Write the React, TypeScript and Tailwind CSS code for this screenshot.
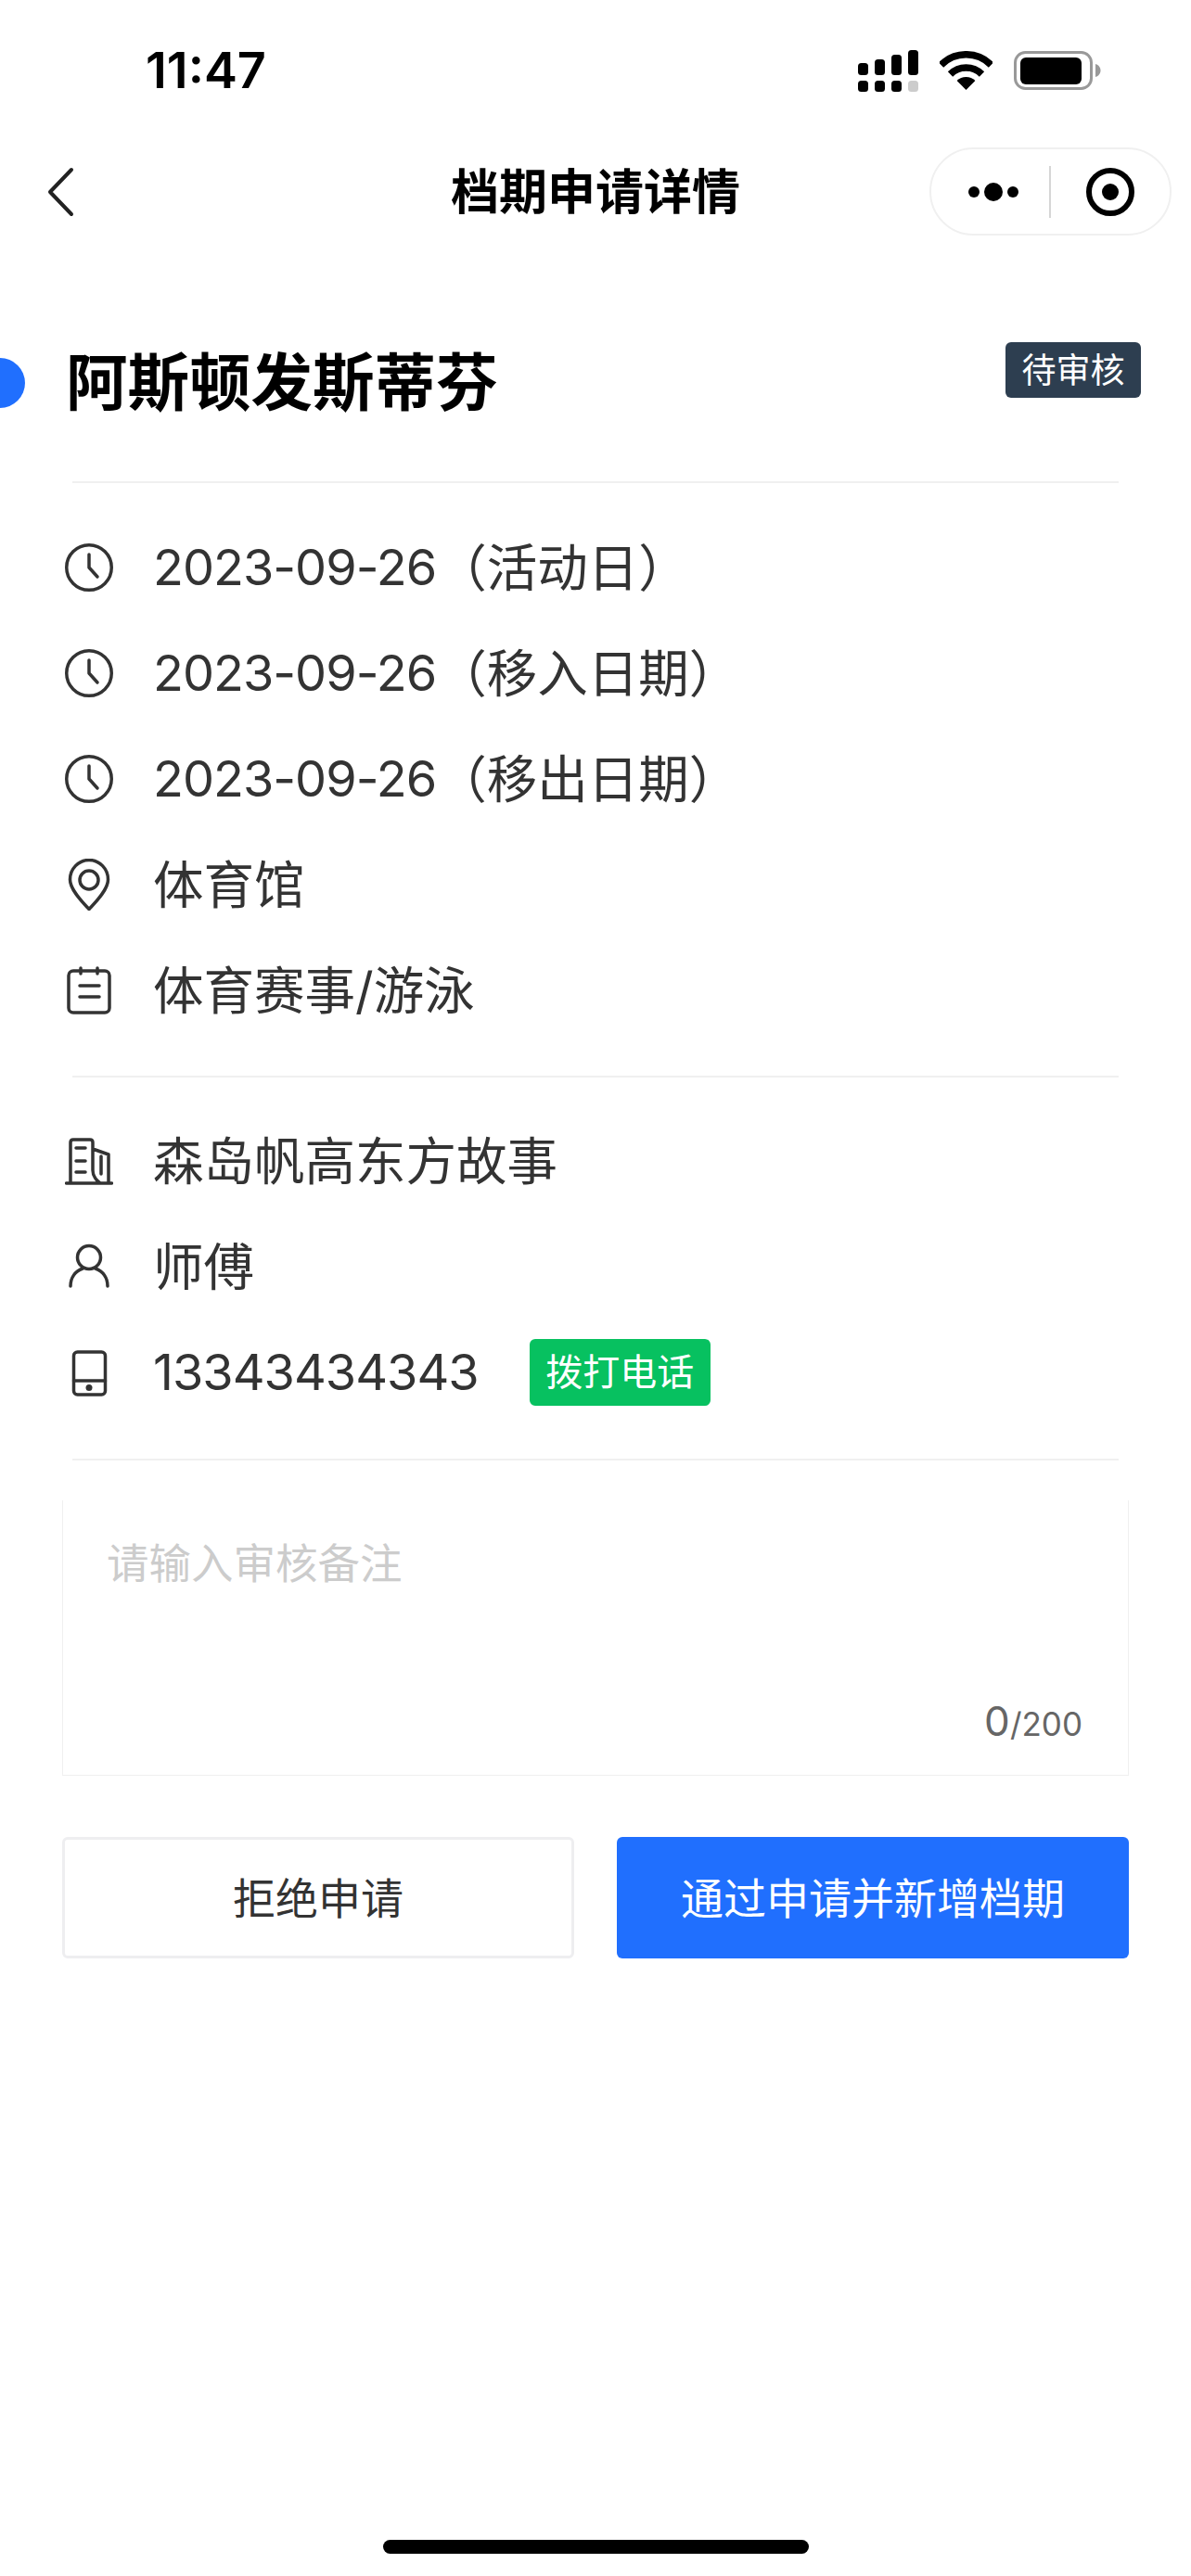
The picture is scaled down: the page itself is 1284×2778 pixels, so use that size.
import React from "react";

const stroke = { fill: "none", stroke: "#333", strokeWidth: 3.5, strokeLinecap: "round" as const, strokeLinejoin: "round" as const };

function Clock() {
  return (
    <svg width="52" height="52" viewBox="0 0 52 52" {...stroke}>
      <circle cx="26" cy="26" r="24.25" />
      <path d="M26 12V26L35 36" />
    </svg>
  );
}
function Pin() {
  return (
    <svg width="52" height="56" viewBox="0 0 52 56" {...stroke}>
      <path d="M26 54.5C20 48 5.5 34 5.5 22.5A20.5 21 0 0 1 46.5 22.5C46.5 34 32 48 26 54.5Z" />
      <circle cx="26" cy="23" r="10" />
    </svg>
  );
}
function Cal() {
  return (
    <svg width="52" height="52" viewBox="0 0 52 52" {...stroke}>
      <rect x="4" y="5" width="44" height="45" rx="5" />
      <path d="M17 2V8M35 2V8M16 21H37M16 33H37" />
    </svg>
  );
}
function Building() {
  return (
    <svg width="52" height="52" viewBox="0 0 52 52" {...stroke}>
      <path d="M1.5 50H50.5M6 50V6Q6 3 9 3H27Q30 3 30 6V36Q30 44 38 50M30 13L47 19V50M39 21V40M12 12H22M12 26H22M12 38H22" />
    </svg>
  );
}
function Person() {
  return (
    <svg width="52" height="52" viewBox="0 0 52 52" {...stroke}>
      <circle cx="26" cy="16" r="12.5" />
      <path d="M6 47C6 38 11 31 19 28M46 47C46 38 41 31 33 28" />
    </svg>
  );
}
function Phone() {
  return (
    <svg width="52" height="52" viewBox="0 0 52 52" {...stroke}>
      <rect x="9.5" y="4" width="34" height="46" rx="4" />
      <path d="M9.5 35H43.5" />
      <circle cx="26" cy="42.5" r="3.5" fill="#333" stroke="none" />
    </svg>
  );
}

function Signal() {
  const cols = [0, 18, 36, 54];
  const tops = [14, 10, 5, 0];
  return (
    <svg width="65" height="45" viewBox="0 0 65 45">
      {cols.map((x, i) => (
        <g key={x}>
          <rect x={x} y={tops[i]} width="11" height={27 - tops[i]} rx="3.5" fill="#000" />
          <rect x={x} y="33" width="11" height="12" rx="3.5" fill={i === 3 ? "#cccccc" : "#000"} />
        </g>
      ))}
    </svg>
  );
}
function Wifi() {
  return (
    <svg width="57" height="42" viewBox="0 0 57 42">
      <path d="M1.5 15A38 38 0 0 1 55.5 15" fill="none" stroke="#000" strokeWidth="7.5" />
      <path d="M11.5 25A24 24 0 0 1 45.5 25" fill="none" stroke="#000" strokeWidth="7.5" />
      <path d="M28.5 42L18.6 32A14 14 0 0 1 38.4 32Z" fill="#000" />
    </svg>
  );
}
function Battery() {
  return (
    <svg width="94" height="42" viewBox="0 0 94 42">
      <rect x="1.5" y="1.5" width="82" height="39" rx="11" fill="none" stroke="#999" strokeWidth="3" />
      <rect x="7" y="7" width="66" height="29" rx="6" fill="#000" />
      <path d="M88 14C91.5 15 93.5 18 93.5 21C93.5 24 91.5 27 88 28Z" fill="#999" />
    </svg>
  );
}

function Row({ icon, children }: { icon: React.ReactNode; children: React.ReactNode }) {
  return (
    <div className="flex h-[114px] items-center pl-[70px]">
      <div className="flex w-[52px] shrink-0 items-center justify-center">{icon}</div>
      <div className="ml-[43px] flex items-center text-[54.5px] leading-none text-[#333] [font-family:Inter,'Noto_Sans_CJK_SC',sans-serif]">
        {children}
      </div>
    </div>
  );
}

function Dt({ children }: { children: React.ReactNode }) {
  return <span className="text-[54px] tracking-[-1px]">{children}</span>;
}

function Divider() {
  return <div className="mx-[78px] h-[2px] bg-[#f0f0f0]" />;
}

export default function App() {
  return (
    <div className="flex h-[2778px] w-[1284px] flex-col overflow-hidden bg-white [font-family:Inter,'Noto_Sans_CJK_SC',sans-serif]">
      <div className="flex h-[152px] items-center pl-[157px] pr-[97px]">
        <span className="text-[54px] font-semibold leading-none text-black">11:47</span>
        <div className="ml-auto flex items-center">
          <Signal />
          <div className="ml-[23px]"><Wifi /></div>
          <div className="ml-[23px]"><Battery /></div>
        </div>
      </div>

      <div className="mt-[7px] grid h-[95px] grid-cols-[1fr_auto_1fr] items-center">
        <div className="pl-[50px]">
          <svg width="30" height="54" viewBox="0 0 30 54" fill="none" stroke="#222" strokeWidth="4" strokeLinecap="round" strokeLinejoin="round">
            <path d="M27 3L4 27L27 51" />
          </svg>
        </div>
        <div className="pt-[2px] text-[52px] font-bold leading-none text-black">档期申请详情</div>
        <div className="mr-[21px] flex h-[95px] w-[261px] items-center justify-self-end rounded-full border-2 border-[#f0f0f0]">
          <div className="flex w-[127px] items-center justify-center gap-[5px] pl-[6px]">
            <span className="size-[12px] rounded-full bg-black" />
            <span className="size-[20px] rounded-full bg-black" />
            <span className="size-[12px] rounded-full bg-black" />
          </div>
          <div className="h-[56px] w-[2px] bg-[#d6d6d6]" />
          <div className="flex flex-1 items-center justify-center">
            <div className="flex size-[52px] items-center justify-center rounded-full border-[6px] border-black">
              <span className="size-[18px] rounded-full bg-black" />
            </div>
          </div>
        </div>
      </div>

      <div className="mt-[115px] flex h-[88px] items-center pr-[54px]">
        <div className="ml-[-27px] size-[54px] shrink-0 rounded-full bg-[#206ffe]" />
        <div className="ml-[44px] text-[66.5px] font-bold leading-none text-black">阿斯顿发斯蒂芬</div>
        <div className="ml-auto flex h-[60px] w-[146px] items-center justify-center self-start rounded-[6px] bg-[#2d3e50] text-[37px] leading-none text-white">待审核</div>
      </div>

      <div className="mt-[62px]"><Divider /></div>

      <div className="mt-[34px]">
        <Row icon={<Clock />}><Dt>2023-09-26</Dt>（活动日）</Row>
        <Row icon={<Clock />}><Dt>2023-09-26</Dt>（移入日期）</Row>
        <Row icon={<Clock />}><Dt>2023-09-26</Dt>（移出日期）</Row>
        <Row icon={<Pin />}>体育馆</Row>
        <Row icon={<Cal />}>体育赛事/游泳</Row>
      </div>

      <div className="mt-[35px]"><Divider /></div>

      <div className="mt-[33px]">
        <Row icon={<Building />}>森岛帆高东方故事</Row>
        <Row icon={<Person />}>师傅</Row>
        <Row icon={<Phone />}>
          <Dt>13343434343</Dt>
          <span className="ml-[55px] flex h-[72px] w-[195px] items-center justify-center rounded-[6px] bg-[#07c160] text-[40px] leading-none text-white">拨打电话</span>
        </Row>
      </div>

      <div className="mt-[36px]"><Divider /></div>

      <div className="mx-[67px] mt-[43px] flex h-[297px] flex-col justify-between border-x border-b border-[#f0f0f0] pb-[36px] pl-[47px] pr-[49px] pt-[46px]">
        <div className="text-[45.5px] leading-[46px] text-[#cccccc]">请输入审核备注</div>
        <div className="flex items-baseline justify-end leading-none text-[#666]">
          <span className="text-[44px]">0</span>
          <span className="text-[35px]">/200</span>
        </div>
      </div>

      <div className="mx-[67px] mt-[66px] grid grid-cols-[552px_552px] justify-between">
        <div className="flex h-[131px] items-center justify-center rounded-[6px] border-[3px] border-[#eeeef0] bg-white text-[46px] leading-none text-[#333]">拒绝申请</div>
        <div className="flex h-[131px] items-center justify-center rounded-[6px] bg-[#206ffe] text-[46px] leading-none text-white">通过申请并新增档期</div>
      </div>

      <div className="mx-auto mb-[24px] mt-auto h-[15px] w-[459px] rounded-[8px] bg-black" />
    </div>
  );
}
